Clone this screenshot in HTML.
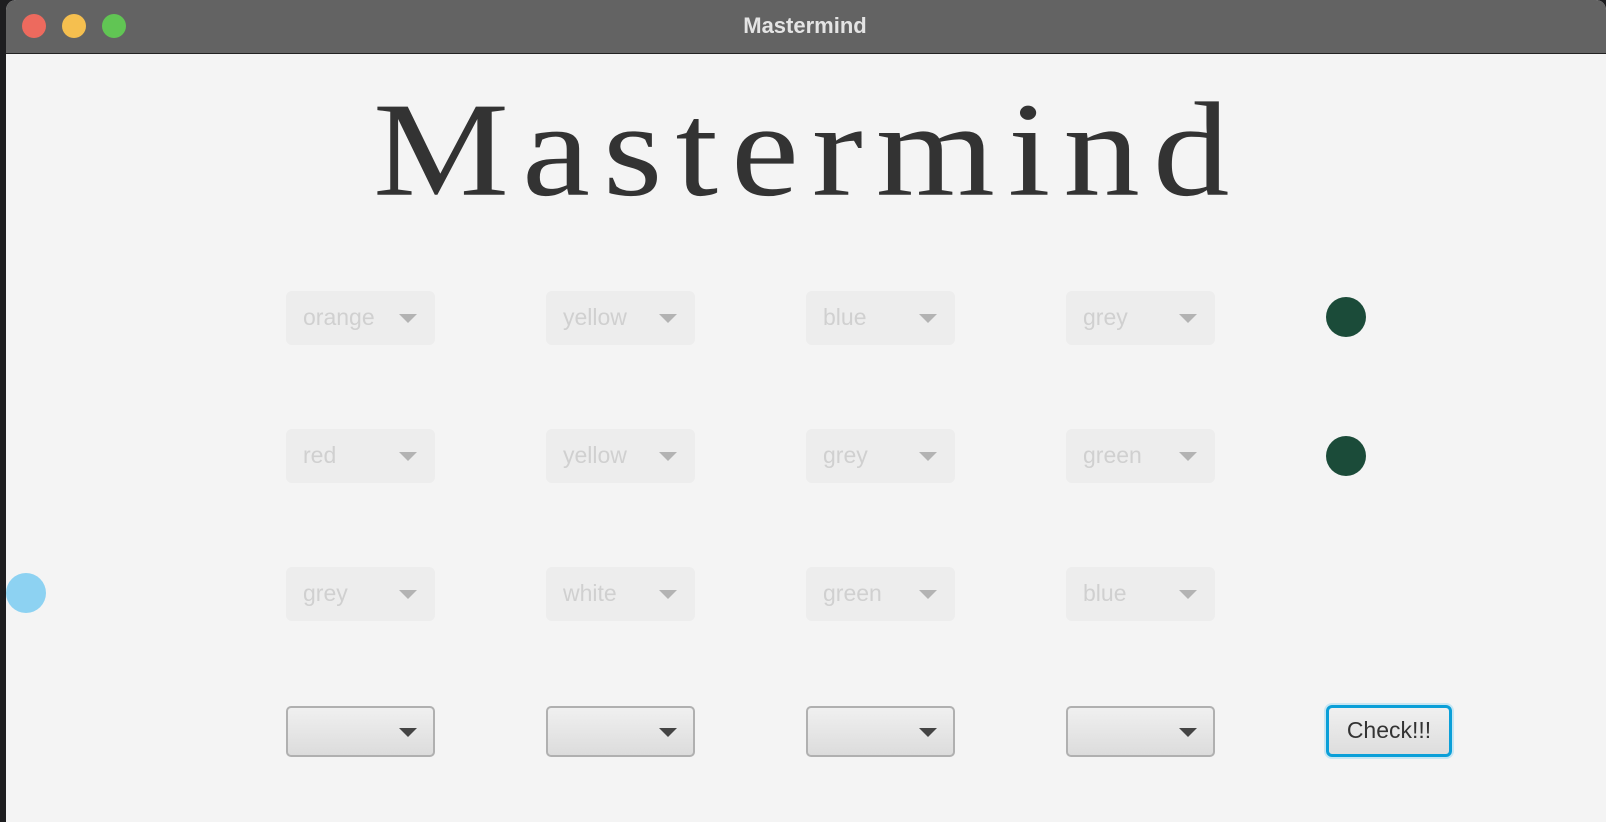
<!DOCTYPE html>
<html><head><meta charset="utf-8"><style>
*{margin:0;padding:0;box-sizing:border-box}
body{width:1606px;height:822px;overflow:hidden;background:#1e1e20;position:relative;font-family:"Liberation Sans",sans-serif}
#win{position:absolute;left:6px;top:0;width:1600px;height:822px;background:#f4f4f4;border-top-left-radius:10px;border-top-right-radius:10px;overflow:hidden}
#bar{position:absolute;left:0;top:0;width:100%;height:54px;background:#636363;border-bottom:1px solid #222}
#bar .t{position:absolute;left:0;width:100%;top:13px;text-align:center;color:#e4e4e4;font-weight:bold;font-size:22px;padding-right:2px}
.tl{position:absolute;top:14px;width:24px;height:24px;border-radius:50%}
h1{position:absolute;left:367px;top:83px;font-family:"Liberation Serif",serif;font-weight:normal;font-size:153px;letter-spacing:13px;color:#333;line-height:1;white-space:nowrap;transform:scaleY(0.88);transform-origin:0 0}
.dd{position:absolute;width:149px;height:54px;background:#ededed;border-radius:6px;color:#d0d0d0;font-size:23px;padding-left:17px;line-height:52px}
.dd:after{content:"";position:absolute;right:18px;top:23px;border-left:9px solid transparent;border-right:9px solid transparent;border-top:9px solid #b3b3b3}
.cb{position:absolute;width:149px;height:51px;border:2px solid #b0b0b0;border-radius:5px;background:linear-gradient(#f0f0f0,#dcdcdc)}
.cb:after{content:"";position:absolute;right:16px;top:20px;border-left:9px solid transparent;border-right:9px solid transparent;border-top:9px solid #444}
.dot{position:absolute;width:40px;height:40px;border-radius:50%;background:#1b4b39}
#chk{position:absolute;left:1320px;top:705px;width:126px;height:52px;border:3px solid #0a9fd8;border-radius:6px;background:linear-gradient(#f0f0f0,#dddddd);box-shadow:0 0 0 2px #c6e6f3;font-size:23px;color:#333;text-align:center;line-height:45px}
</style></head><body>
<div id="win">
<div id="bar"><div class="t">Mastermind</div>
<div class="tl" style="left:16px;background:#ed6a5e"></div>
<div class="tl" style="left:56px;background:#f5bf4f"></div>
<div class="tl" style="left:96px;background:#61c554"></div></div>
<h1>Mastermind</h1>
<div class="dd" style="left:280px;top:291px">orange</div>
<div class="dd" style="left:540px;top:291px">yellow</div>
<div class="dd" style="left:800px;top:291px">blue</div>
<div class="dd" style="left:1060px;top:291px">grey</div>
<div class="dd" style="left:280px;top:429px">red</div>
<div class="dd" style="left:540px;top:429px">yellow</div>
<div class="dd" style="left:800px;top:429px">grey</div>
<div class="dd" style="left:1060px;top:429px">green</div>
<div class="dd" style="left:280px;top:567px">grey</div>
<div class="dd" style="left:540px;top:567px">white</div>
<div class="dd" style="left:800px;top:567px">green</div>
<div class="dd" style="left:1060px;top:567px">blue</div>
<div class="cb" style="left:280px;top:706px"></div>
<div class="cb" style="left:540px;top:706px"></div>
<div class="cb" style="left:800px;top:706px"></div>
<div class="cb" style="left:1060px;top:706px"></div>
<div class="dot" style="left:1320px;top:297px"></div>
<div class="dot" style="left:1320px;top:436px"></div>
<div id="chk">Check!!!</div>
<div class="dot" style="left:0px;top:573px;background:#8dd2f2"></div>
</div>
</body></html>
